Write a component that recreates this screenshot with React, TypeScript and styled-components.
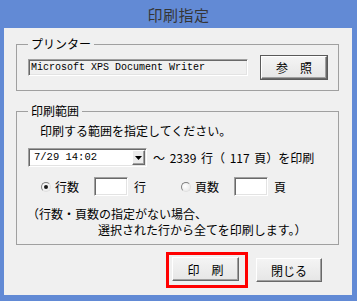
import styled, { createGlobalStyle } from "styled-components";

const GlobalStyle = createGlobalStyle`
  * {
    box-sizing: border-box;
  }
  body {
    margin: 0;
    width: 357px;
    height: 301px;
    overflow: hidden;
    font-family: "Noto Sans CJK JP", "Noto Sans", sans-serif;
  }
`;

export default function App() {
  return (
    <>
      <GlobalStyle />
      <Window>
        <TitleBar>印刷指定</TitleBar>
        <Client>
          <GroupBox $mt={9}>
            <Legend>プリンター</Legend>
            <PrinterRow>
              <TextBox $width={221} $height={17} $readOnly>
                Microsoft XPS Document Writer
              </TextBox>
              <Button $width={66} $height={23} $isDefault>参　照</Button>
            </PrinterRow>
          </GroupBox>

          <GroupBox $mt={13}>
            <Legend>印刷範囲</Legend>
            <Instruction>印刷する範囲を指定してください。</Instruction>
            <ComboRow>
              <Combo>
                <ComboText>7/29 14:02</ComboText>
                <ArrowButton>
                  <svg width="7" height="4" viewBox="0 0 7 4">
                    <path d="M0 0H7L3.5 4Z" fill="#000" />
                  </svg>
                </ArrowButton>
              </Combo>
              <RangeText>～ 2339 行（ 117 頁）を印刷</RangeText>
            </ComboRow>
            <RadioRow>
              <RadioOption>
                <Radio $checked />
                <OptionLabel>行数</OptionLabel>
                <TextBox $width={34} $height={19} />
                <Unit>行</Unit>
              </RadioOption>
              <RadioOption>
                <Radio />
                <OptionLabel>頁数</OptionLabel>
                <TextBox $width={34} $height={19} />
                <Unit>頁</Unit>
              </RadioOption>
            </RadioRow>
            <Note>
              <NoteLine>（行数・頁数の指定がない場合、</NoteLine>
              <NoteLine $indent={71}>選択された行から全てを印刷します。）</NoteLine>
            </Note>
          </GroupBox>

          <ActionBar>
            <Highlight>
              <Button $width={67} $height={24}>印　刷</Button>
            </Highlight>
            <Button $width={66} $height={24}>閉じる</Button>
          </ActionBar>
        </Client>
      </Window>
    </>
  );
}

const Window = styled.div`
  width: 357px;
  height: 301px;
  background-color: #628ad5;
  display: flex;
  flex-direction: column;
`;

const TitleBar = styled.div`
  height: 28px;
  display: flex;
  align-items: center;
  justify-content: center;
  font-size: 15px;
  color: #353535;
  letter-spacing: 0.5px;
`;

const Client = styled.div`
  flex: 1;
  margin: 0 5px 6px 4px;
  background-color: #f0f0f0;
  display: flex;
  flex-direction: column;
  font-size: 12px;
  color: #000;
`;

const GroupBox = styled.fieldset<{ $mt: number }>`
  margin: ${(p) => p.$mt}px 13px 0 12px;
  padding: 5px 11px 6px;
  border: 1px solid #a0a0a0;
  min-width: 0;
`;

const Legend = styled.legend`
  padding: 0 3px;
  font-size: 12px;
  line-height: 14px;
`;

const PrinterRow = styled.div`
  display: flex;
  align-items: center;
  gap: 13px;
  padding-bottom: 5px;
`;

const TextBox = styled.div<{ $width: number; $height: number; $readOnly?: boolean }>`
  width: ${(p) => p.$width}px;
  height: ${(p) => p.$height}px;
  background-color: ${(p) => (p.$readOnly ? "#f0f0f0" : "#fff")};
  border: 1px solid;
  border-color: #a0a0a0 #fff #fff #a0a0a0;
  box-shadow: inset 1px 1px #696969, inset -1px -1px #e3e3e3;
  font-family: "Liberation Mono", "DejaVu Sans Mono", monospace;
  font-size: 10px;
  line-height: ${(p) => p.$height - 2}px;
  padding-left: 2px;
  white-space: nowrap;
  overflow: hidden;
`;

const Button = styled.div<{ $width: number; $height: number; $isDefault?: boolean }>`
  width: ${(p) => p.$width}px;
  height: ${(p) => p.$height}px;
  display: flex;
  align-items: center;
  justify-content: center;
  background: linear-gradient(#f4f4f4, #e6e6e6);
  border: 1px solid;
  border-color: #fff #696969 #696969 #fff;
  box-shadow: inset -1px -1px #a0a0a0
    ${(p) => (p.$isDefault ? ", 0 0 0 1px #5a5a5a" : "")};
  font-size: 12px;
  color: #000;
`;

const Instruction = styled.div`
  margin-left: 12px;
  line-height: 16px;
`;

const ComboRow = styled.div`
  margin-top: 9px;
  display: flex;
  align-items: center;
  gap: 6px;
`;

const Combo = styled.div`
  width: 119px;
  height: 19px;
  background-color: #fff;
  border: 1px solid;
  border-color: #a0a0a0 #fff #fff #a0a0a0;
  box-shadow: inset 1px 1px #696969, inset -1px -1px #e3e3e3;
  display: flex;
  align-items: stretch;
  padding: 1px;
`;

const ComboText = styled.div`
  flex: 1;
  font-family: "Liberation Mono", "DejaVu Sans Mono", monospace;
  font-size: 10.5px;
  line-height: 15px;
  padding-left: 4px;
`;

const ArrowButton = styled.div`
  width: 13px;
  display: flex;
  align-items: center;
  justify-content: center;
  background-color: #ececec;
  border: 1px solid;
  border-color: #fff #696969 #696969 #fff;
  box-shadow: inset -1px -1px #a0a0a0;
`;

const RangeText = styled.div`
  line-height: 16px;
  white-space: nowrap;
  word-spacing: 2px;
`;

const RadioRow = styled.div`
  margin-top: 10px;
  margin-left: 13px;
  display: flex;
  align-items: center;
  gap: 35px;
`;

const RadioOption = styled.div`
  display: flex;
  align-items: center;
`;

const Radio = styled.span<{ $checked?: boolean }>`
  position: relative;
  width: 10px;
  height: 10px;
  border-radius: 50%;
  border: 1px solid;
  border-color: #808080 #e0e0e0 #e0e0e0 #808080;
  background: radial-gradient(circle at 40% 40%, #fff, #e4e4e4);
  margin-right: 4px;

  &::after {
    content: "";
    display: ${(p) => (p.$checked ? "block" : "none")};
    position: absolute;
    left: 2px;
    top: 2px;
    width: 4px;
    height: 4px;
    border-radius: 50%;
    background-color: #1a1a1a;
  }
`;

const OptionLabel = styled.span`
  line-height: 16px;
  margin-right: 15px;
`;

const Unit = styled.span`
  line-height: 16px;
  margin-left: 6px;
`;

const Note = styled.div`
  margin-top: 10px;
  margin-left: -1px;
`;

const NoteLine = styled.div<{ $indent?: number }>`
  line-height: 16px;
  padding-left: ${(p) => p.$indent ?? 0}px;
  white-space: nowrap;
`;

const ActionBar = styled.div`
  margin-top: 7px;
  padding-right: 30px;
  display: flex;
  justify-content: flex-end;
  align-items: center;
  gap: 8px;
`;

const Highlight = styled.div`
  border: 3px solid #ff0000;
  padding: 2px 6px 4px 3px;
`;
